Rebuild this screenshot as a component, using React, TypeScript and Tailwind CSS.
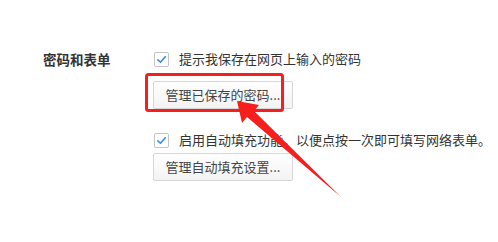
import React from 'react';

function CheckBox() {
  return (
    <span className="ml-px flex h-[15px] w-[15px] shrink-0 items-center justify-center rounded-[2px] border border-[#c4c4c4] bg-white">
      <svg viewBox="0 0 12 12" className="h-[11px] w-[11px]" fill="none">
        <path d="M2 6.4 L4.8 9 L10.2 3" stroke="#3b8beb" strokeWidth={1.8} strokeLinecap="round" strokeLinejoin="round" />
      </svg>
    </span>
  );
}

function SettingButton({ label }: { label: string }) {
  return (
    <button className="flex h-[28px] w-[140px] items-center justify-center rounded-[2px] border border-[#d6d6d6] bg-gradient-to-b from-white to-[#f3f3f3] text-[13px] text-[#444]">
      {label}
    </button>
  );
}

export default function App() {
  return (
    <div
      className="relative h-[242px] w-[498px] overflow-hidden bg-white text-[#333]"
      style={{ fontFamily: '"Noto Sans CJK SC", "Noto Sans", sans-serif' }}
    >
      <div className="flex pl-[43px] pt-[49px]">
        {/* section label */}
        <div className="flex h-[20px] w-[110px] items-center text-[13.5px] font-bold text-[#333]">
          密码和表单
        </div>

        <div className="flex flex-col">
          <label className="flex h-[20px] items-center gap-[10px] text-[13px]">
            <CheckBox />
            <span>提示我保存在网页上输入的密码</span>
          </label>
          <div className="mt-[12px]">
            <SettingButton label="管理已保存的密码..." />
          </div>

          <label className="mt-[21px] flex h-[20px] items-center gap-[10px] whitespace-nowrap text-[13px]">
            <CheckBox />
            <span>启用自动填充功能，以便点按一次即可填写网络表单。</span>
          </label>
          <div className="mt-[3px]">
            <SettingButton label="管理自动填充设置..." />
          </div>
        </div>
      </div>

      {/* annotation overlay */}
      <svg className="pointer-events-none absolute left-0 top-0" width={498} height={242} viewBox="0 0 498 242">
        <rect x={146.5} y={74.5} width={136} height={36} rx={2} fill="none" stroke="#f71e1e" strokeWidth={3} />
        <polygon points="237,101 259,105 254,111 341,197 247,117 242,123" fill="#f71e1e" />
      </svg>
    </div>
  );
}
